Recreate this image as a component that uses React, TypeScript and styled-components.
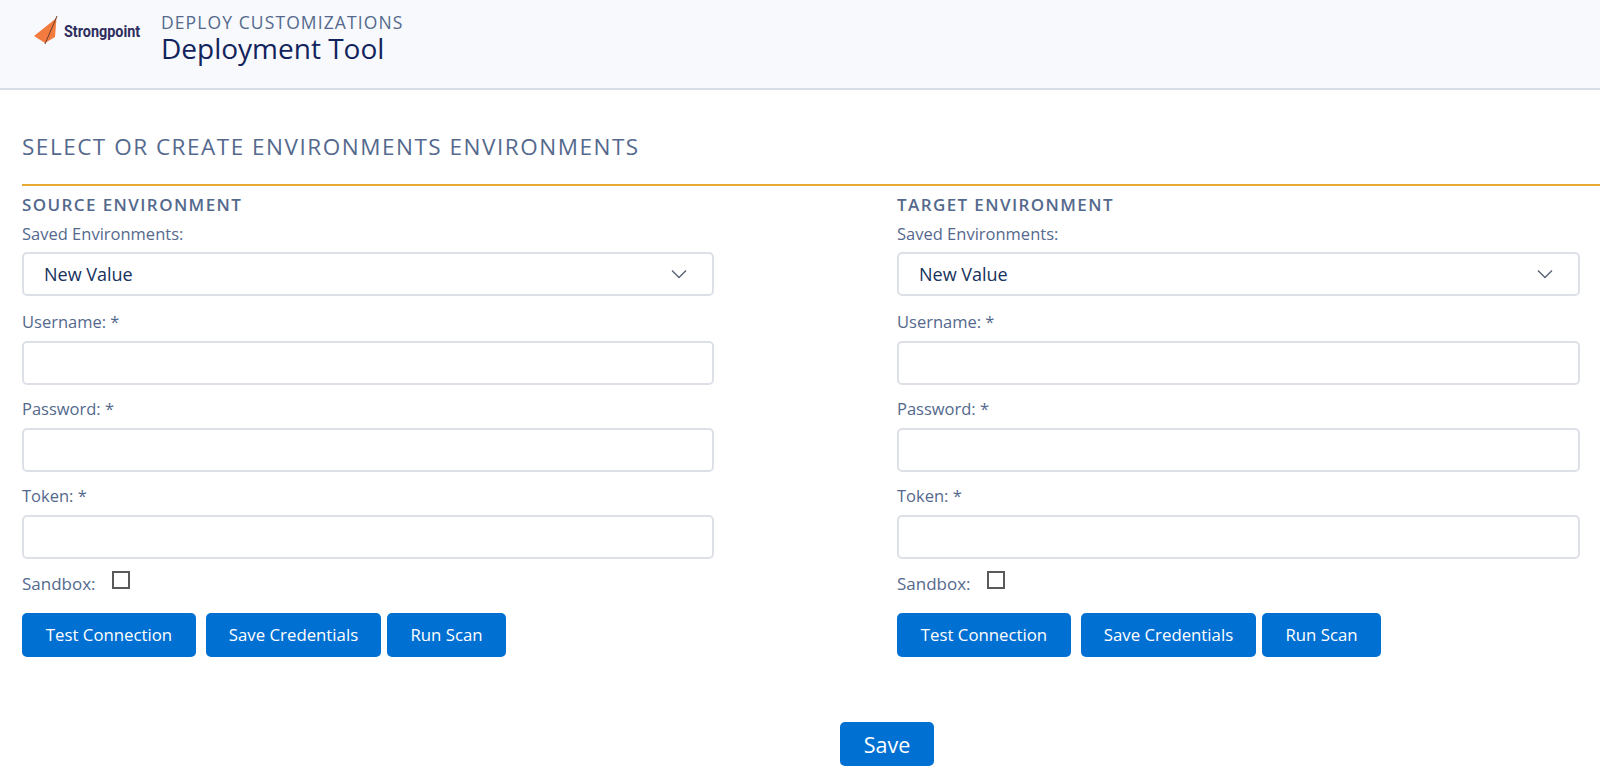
import React from 'react';
import styled, { createGlobalStyle } from 'styled-components';

const GlobalStyle = createGlobalStyle`
  html, body {
    margin: 0;
    padding: 0;
    background: #ffffff;
    font-family: "Open Sans", "Noto Sans", "Liberation Sans", sans-serif;
  }
`;

const Page = styled.div`
  width: 1600px;
  height: 778px;
  overflow: hidden;
  display: flex;
  flex-direction: column;
`;

const Header = styled.header`
  height: 88px;
  box-sizing: content-box;
  background: #f7f9fc;
  border-bottom: 2px solid #d9dde5;
  display: flex;
  align-items: flex-start;
  padding-left: 34px;
`;

const Logo = styled.div`
  display: flex;
  align-items: center;
  width: 127px;
  height: 30px;
  margin-top: 15px;
`;

const LogoText = styled.span`
  font-family: "Roboto", sans-serif;
  font-weight: 700;
  font-size: 16px;
  color: #2f2d5e;
  margin: 3px 0 0 6px;
  transform: scaleX(0.9);
  transform-origin: left center;
`;

const HeaderTitles = styled.div`
  display: flex;
  flex-direction: column;
  padding-top: 12px;
`;

const Eyebrow = styled.div`
  font-size: 17.5px;
  line-height: 20px;
  letter-spacing: 1.1px;
  color: #54698d;
`;

const PageTitle = styled.h1`
  margin: 0;
  font-size: 28px;
  line-height: 32px;
  font-weight: 400;
  color: #12245c;
`;

const Body = styled.main`
  padding: 42px 0 0 22px;
`;

const SectionTitle = styled.h2`
  margin: 0;
  font-size: 22.5px;
  line-height: 30px;
  font-weight: 400;
  letter-spacing: 1.52px;
  color: #54698d;
  padding-bottom: 22px;
  border-bottom: 2px solid #e8a935;
`;

const Columns = styled.div`
  display: grid;
  grid-template-columns: 692px 683px;
  column-gap: 183px;
`;

const Column = styled.section`
  display: flex;
  flex-direction: column;
`;

const ColumnTitle = styled.h3`
  margin: 0;
  padding-top: 9px;
  font-size: 17px;
  line-height: 20px;
  font-weight: 600;
  letter-spacing: 1.4px;
  color: #54698d;
`;

const Label = styled.label`
  display: block;
  margin-top: 8px;
  font-size: 16.5px;
  line-height: 22px;
  color: #54698d;
`;

const FieldLabel = styled(Label)`
  margin-top: 13px;
`;

const FirstFieldLabel = styled(Label)`
  margin-top: 15px;
`;

const SelectBox = styled.div`
  box-sizing: border-box;
  height: 44px;
  margin-top: 7px;
  padding: 0 25px 0 20px;
  border: 2px solid #dde1e7;
  border-radius: 5px;
  background: #ffffff;
  display: flex;
  align-items: center;
  justify-content: space-between;
  font-size: 18px;
  color: #16325c;
`;

const TextInput = styled.input`
  box-sizing: border-box;
  display: block;
  width: 100%;
  height: 44px;
  margin-top: 8px;
  border: 2px solid #dde1e7;
  border-radius: 5px;
  background: #ffffff;
  outline: none;
`;

const SandboxRow = styled.div`
  display: flex;
  align-items: flex-start;
  gap: 16px;
  margin-top: 12px;
  height: 28px;
`;

const SandboxLabel = styled.span`
  font-size: 17px;
  line-height: 22px;
  margin-top: 2px;
  color: #54698d;
`;

const CheckBox = styled.span`
  box-sizing: border-box;
  width: 18px;
  height: 18px;
  border: 2px solid #5a5a5a;
  background: #ffffff;
`;

const ButtonRow = styled.div`
  display: flex;
  margin-top: 14px;
`;

const ActionButton = styled.button<{ $width: number; $gap: number }>`
  width: ${(p) => p.$width}px;
  height: 44px;
  margin-right: ${(p) => p.$gap}px;
  border: none;
  border-radius: 5px;
  background: #0070d2;
  color: #ffffff;
  font-family: inherit;
  font-size: 16.8px;
  padding: 0 0 2px;
`;

const SaveRow = styled.div`
  display: flex;
  padding-left: 818px;
  margin-top: 65px;
`;

const SaveButton = styled.button`
  width: 94px;
  height: 44px;
  border: none;
  border-radius: 5px;
  background: #0070d2;
  color: #ffffff;
  font-family: inherit;
  font-size: 21.5px;
  padding: 0;
`;

const Chevron = () => (
  <svg width="16" height="10" viewBox="0 0 16 10" fill="none">
    <path d="M1 1.5 L8 8.5 L15 1.5" stroke="#54606e" strokeWidth="1.3" />
  </svg>
);

const LogoMark = () => (
  <svg width="24" height="30" viewBox="0 0 24 30">
    <path d="M22.5 3 L0 21 L11 28 L21 22 Z" fill="#f47b3f" />
    <path d="M23 1 L11 29" stroke="#6b3a2a" strokeWidth="1" />
  </svg>
);

const EnvironmentForm = ({ title }: { title: string }) => (
  <Column>
    <ColumnTitle>{title}</ColumnTitle>
    <Label>Saved Environments:</Label>
    <SelectBox>
      New Value
      <Chevron />
    </SelectBox>
    <FirstFieldLabel>Username: *</FirstFieldLabel>
    <TextInput />
    <FieldLabel>Password: *</FieldLabel>
    <TextInput />
    <FieldLabel>Token: *</FieldLabel>
    <TextInput />
    <SandboxRow>
      <SandboxLabel>Sandbox:</SandboxLabel>
      <CheckBox />
    </SandboxRow>
    <ButtonRow>
      <ActionButton $width={174} $gap={10}>Test Connection</ActionButton>
      <ActionButton $width={175} $gap={6}>Save Credentials</ActionButton>
      <ActionButton $width={119} $gap={0}>Run Scan</ActionButton>
    </ButtonRow>
  </Column>
);

const App = () => (
  <Page>
    <GlobalStyle />
    <Header>
      <Logo>
        <LogoMark />
        <LogoText>Strongpoint</LogoText>
      </Logo>
      <HeaderTitles>
        <Eyebrow>DEPLOY CUSTOMIZATIONS</Eyebrow>
        <PageTitle>Deployment Tool</PageTitle>
      </HeaderTitles>
    </Header>
    <Body>
      <SectionTitle>SELECT OR CREATE ENVIRONMENTS ENVIRONMENTS</SectionTitle>
      <Columns>
        <EnvironmentForm title="SOURCE ENVIRONMENT" />
        <EnvironmentForm title="TARGET ENVIRONMENT" />
      </Columns>
      <SaveRow>
        <SaveButton>Save</SaveButton>
      </SaveRow>
    </Body>
  </Page>
);

export default App;
